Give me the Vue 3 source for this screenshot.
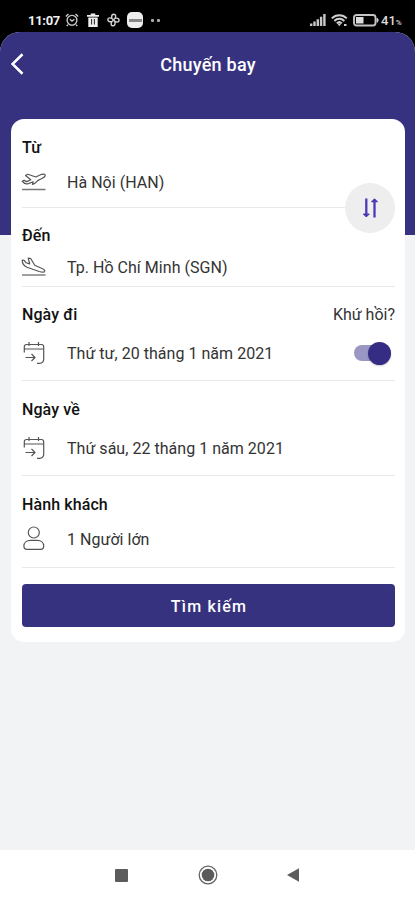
<script setup>
import { ref } from 'vue'

const roundTrip = ref(true)
const fields = [
  { key: 'from', label: 'Từ', value: 'Hà Nội (HAN)', icon: 'takeoff' },
  { key: 'to', label: 'Đến', value: 'Tp. Hồ Chí Minh (SGN)', icon: 'landing' },
  { key: 'depart', label: 'Ngày đi', value: 'Thứ tư, 20 tháng 1 năm 2021', icon: 'calendar' },
  { key: 'return', label: 'Ngày về', value: 'Thứ sáu, 22 tháng 1 năm 2021', icon: 'calendar' },
  { key: 'guests', label: 'Hành khách', value: '1 Người lớn', icon: 'person' },
]
</script>

<template>
  <div class="screen">
    <header class="status">
      <span class="time">11:07</span>
      <svg class="s-alarm" width="14" height="14" viewBox="0 0 14 14" fill="none" stroke="#c9c9c9" stroke-width="1.4">
        <circle cx="7" cy="7.3" r="4.9" />
        <path d="M.8 3.4 3.5 1M13.2 3.4 10.5 1M2.9 11.6 1.7 13M11.1 11.6l1.2 1.4M4.8 6.3 7 8.2l2.4-2" />
      </svg>
      <svg class="s-trash" width="12" height="14" viewBox="0 0 12 14">
        <path d="M0 2h3.700V.4h4.600V2H12v1.800H0zM1.300 4.400h9.400V14H1.300z" fill="#eee" />
        <path d="M4.600 6v5.500M7.400 6v5.500" stroke="#222" stroke-width="1" />
      </svg>
      <svg class="s-fan" width="13" height="14" viewBox="0 0 13 14" fill="none" stroke="#d4d4d4" stroke-width="1.400">
        <path d="M6.500 7C3.800 5.800 4.200 1.200 6.700 1.200S9.500 4.500 6.500 7ZM6.500 7c1.500-3 5.800-2 5.600.4S8.500 9.800 6.500 7ZM6.500 7c2.300 1.500 2 5.800-.5 5.800S3.500 9.300 6.500 7ZM6.500 7C5 9.800.8 9 .9 6.600S4.500 4.300 6.500 7Z" />
      </svg>
      <span class="app-badge"><i></i></span>
      <span class="dots"><i></i><i></i></span>
      <span class="grow"></span>
      <svg class="s-signal" width="16" height="12" viewBox="0 0 16 12" fill="#c8c8c8">
        <path d="M0 9.500h2.400V12H0zM3.300 7.500h2.400V12H3.300zM6.600 5.300H9V12H6.600zM9.900 2.700h2.400V12H9.900zM13.200 0h2.400v12h-2.400z" />
      </svg>
      <svg class="s-wifi" width="17" height="13" viewBox="0 0 17 13" fill="none" stroke="#cfcfcf" stroke-width="2">
        <path d="M.8 4.400c4.200-4.200 10.800-4.200 15 0M3.300 7c2.800-2.900 7.200-2.900 10 0M5.800 9.400c1.500-1.500 3.500-1.500 5 0" />
        <path d="m6.300 9.500 2 2.800 2-2.800z" fill="#cfcfcf" stroke="none" />
        <path d="M13 11h2.500" />
      </svg>
      <svg class="s-battery" width="26" height="13" viewBox="0 0 26 13">
        <rect x="1" y="1" width="21.500" height="10.500" rx="2.500" fill="none" stroke="#c4c4c4" stroke-width="1.900" />
        <rect x="3" y="3" width="7.500" height="6.500" fill="#ddd" />
        <path d="M24 4.200c1.500.5 1.500 3.600 0 4.100z" fill="#ccc" stroke="#ccc" />
      </svg>
      <span class="pct">41<small>%</small></span>
    </header>

    <main class="page">
      <div class="hero">
        <svg class="back" width="14" height="22" viewBox="0 0 14 22" fill="none" stroke="#fff" stroke-width="2.600">
          <path d="M11.500 1.200 1.500 11l10 9.800" />
        </svg>
        <h1>Chuyến bay</h1>
      </div>

      <section class="card">
        <div v-for="f in fields" :key="f.key" class="field" :class="f.key">
          <div class="label">
            <b>{{ f.label }}</b>
            <span v-if="f.key === 'depart'" class="hint">Khứ hồi?</span>
          </div>
          <div class="row">
            <span class="icon">
              <svg v-if="f.icon === 'takeoff'" width="26" height="20" viewBox="0 0 26 20">
                <path d="M1.200 9.200 3 8.400l2.800 1.200 4-1.900-5.300-4.200 2.300-1.200 8 2.700 4.700-2.300c2.200-1 4.500-.7 4.700.3.200 1.300-1.600 2.700-3.800 3.800l-3.400 1.600c-2 2.300-3.400 3.600-5.600 4l.8-2.600-4.800 1.800c-2.500.8-4.400.2-6.200-2.400Z" />
                <path class="base" d="M1 17.500h23.500" />
              </svg>
              <svg v-else-if="f.icon === 'landing'" width="26" height="20" viewBox="0 0 26 20">
                <path d="m1.200 3 2 .4 1.900 2.400 3.600 1.100L7.200 1.100l2.500.4 4 6.700 5.700 2.500c2.500.9 4.600 2.300 4.300 3.500-.4 1.300-2.700 1.200-5.500.3L6 10.200C3 9 1.200 7 1.200 3Z" />
                <path class="base" d="M1 18h23.500" />
              </svg>
              <svg v-else-if="f.icon === 'calendar'" width="26" height="24" viewBox="0 0 26 24">
                <path d="M3.300 11.500V5.800c0-1.500.8-2.300 2.300-2.300h14.800c1.500 0 2.300.8 2.300 2.300v12.300c0 2.700-1.500 4.200-4.200 4.200H16M3.300 8h19.400M8 1v4M17.500 1v4M4.500 16.500h9.200M10.500 13l3.500 3.500-3.500 3.500" />
              </svg>
              <svg v-else width="26" height="26" viewBox="0 0 26 26">
                <circle cx="12.800" cy="6.500" r="5.500" />
                <path d="M9.300 14.300h7c3.700 0 6.400 2.400 6.400 5.700 0 2.200-1 3.300-3.100 3.300H6c-2.100 0-3.100-1.100-3.100-3.300 0-3.300 2.700-5.700 6.400-5.700Z" />
              </svg>
            </span>
            <span class="value">{{ f.value }}</span>
            <button v-if="f.key === 'depart'" class="toggle" :class="{ on: roundTrip }" aria-label="Khứ hồi" @click="roundTrip = !roundTrip"><i></i></button>
          </div>
          <button v-if="f.key === 'from'" class="swap" aria-label="Đổi chiều">
            <svg width="18" height="22" viewBox="0 0 18 22" fill="none" stroke="#4b39b5" stroke-width="2.300">
              <path d="M5.300 1.500V18M13.500 20.500V4" />
              <path d="M2.300 17h6l-3 3zM10.500 4.800h6l-3-3z" fill="#4b39b5" stroke-width="1" />
            </svg>
          </button>
        </div>
        <button class="search">Tìm kiếm</button>
      </section>
    </main>

    <nav class="nav">
      <svg width="13" height="13" viewBox="0 0 13 13"><rect width="13" height="13" rx="1" fill="#5c5c5c" /></svg>
      <svg width="20" height="20" viewBox="0 0 20 20">
        <circle cx="10" cy="10" r="8.800" fill="none" stroke="#636363" stroke-width="1.300" />
        <circle cx="10" cy="10" r="6.300" fill="#5a5a5a" />
      </svg>
      <svg width="13" height="14" viewBox="0 0 13 14"><path d="M0 7 12 .3v13.400z" fill="#5c5c5c" /></svg>
    </nav>
  </div>
</template>

<style>
body {
  background: #000;
}
</style>

<style scoped>
* {
  box-sizing: border-box;
}
.screen {
  height: 900px;
  display: flex;
  flex-direction: column;
  background: #000;
  font-family: Roboto, "Noto Sans", sans-serif;
  color: #333;
}
button {
  border: 0;
  padding: 0;
  font-family: inherit;
}
svg {
  display: block;
  flex: none;
}
.status {
  height: 32px;
  padding: 8px 12px 0 28px;
  display: flex;
  align-items: center;
  color: #f0f0f0;
}
.time {
  width: 37px;
  font-size: 13px;
  font-weight: 700;
  letter-spacing: -0.3px;
}
.s-trash {
  margin-left: 8px;
}
.s-fan {
  margin-left: 8px;
}
.app-badge {
  width: 16px;
  height: 16px;
  margin-left: 7px;
  border-radius: 5px;
  background: #eee;
  display: flex;
  align-items: center;
  justify-content: center;
}
.app-badge i {
  width: 13px;
  height: 3px;
  background: #888;
}
.dots {
  display: flex;
  gap: 3px;
  margin-left: 8px;
}
.dots i {
  width: 3px;
  height: 3px;
  border-radius: 1px;
  background: #aaa;
}
.grow {
  flex: 1;
}
.s-wifi {
  margin-left: 5px;
}
.s-battery {
  margin-left: 5px;
}
.pct {
  margin-left: 2px;
  width: 22px;
  font-size: 13px;
  font-weight: 500;
  color: #ddd;
  white-space: nowrap;
}
.pct small {
  font-size: 8px;
}
.page {
  height: 818px;
  background: #f1f3f5;
  border-radius: 20px 20px 0 0;
  overflow: hidden;
}
.hero {
  height: 203px;
  padding: 20px 12px 0 11px;
  display: grid;
  grid-template-columns: 14px 1fr 14px;
  align-items: start;
  background: #37327f;
}
.back {
  margin-top: 1px;
}
h1 {
  margin: 0;
  padding-left: 2px;
  font-size: 18px;
  line-height: 26px;
  font-weight: 500;
  letter-spacing: 0.25px;
  text-align: center;
  color: #fff;
}
.card {
  margin: -116px 10px 0 11px;
  height: 523px;
  padding: 0 10px 0 11px;
  background: #fff;
  border-radius: 13px;
  position: relative;
}
.field {
  height: 95px;
  padding-top: 19px;
  border-bottom: 1px solid #e9e9e9;
  position: relative;
}
.label {
  height: 20px;
  display: flex;
  justify-content: space-between;
  font-size: 16px;
  line-height: 20px;
}
.label b {
  font-weight: 500;
  letter-spacing: 0.1px;
  color: #111;
}
.row {
  height: 24px;
  margin-top: 16px;
  display: flex;
  align-items: center;
}
.from {
  height: 89px;
  padding-top: 19px;
}
.from .row {
  margin-top: 12px;
}
.to {
  height: 79px;
  padding-top: 18px;
}
.to .row {
  margin-top: 9px;
}
.depart {
  height: 94px;
  padding-top: 18px;
}
.guests {
  height: 92px;
}
.guests .row {
  margin-top: 12px;
}
.icon {
  width: 45px;
  flex: none;
}
.icon svg {
  margin-left: -1px;
  fill: none;
  stroke: #555;
  stroke-width: 1.2;
  stroke-linejoin: round;
}
.icon .base {
  stroke: #777;
  stroke-width: 1.4;
}
.value {
  font-size: 16px;
  letter-spacing: 0.03px;
  white-space: nowrap;
}
.toggle {
  width: 37px;
  height: 16px;
  margin: 0 4px 0 auto;
  border-radius: 8px;
  background: #b9b9bf;
  display: flex;
  align-items: center;
}
.toggle i {
  width: 23px;
  height: 23px;
  flex: none;
  border-radius: 50%;
  background: #fff;
  box-shadow: 0 1px 2px #0003;
}
.toggle.on {
  justify-content: flex-end;
  background: #9a97c4;
}
.toggle.on i {
  background: #342d83;
}
.swap {
  position: absolute;
  right: 0;
  bottom: -26px;
  width: 50px;
  height: 50px;
  border-radius: 50%;
  background: #eee;
  display: flex;
  align-items: center;
  justify-content: center;
  z-index: 1;
}
.search {
  display: block;
  width: 100%;
  height: 43px;
  padding: 1px 0 0 1px;
  margin-top: 16px;
  border-radius: 4px;
  background: #37327f;
  color: #fff;
  font-size: 16px;
  font-weight: 500;
  letter-spacing: 1.2px;
}
.nav {
  height: 50px;
  padding: 0 115px;
  display: flex;
  align-items: center;
  justify-content: space-between;
  background: #fff;
}
</style>
